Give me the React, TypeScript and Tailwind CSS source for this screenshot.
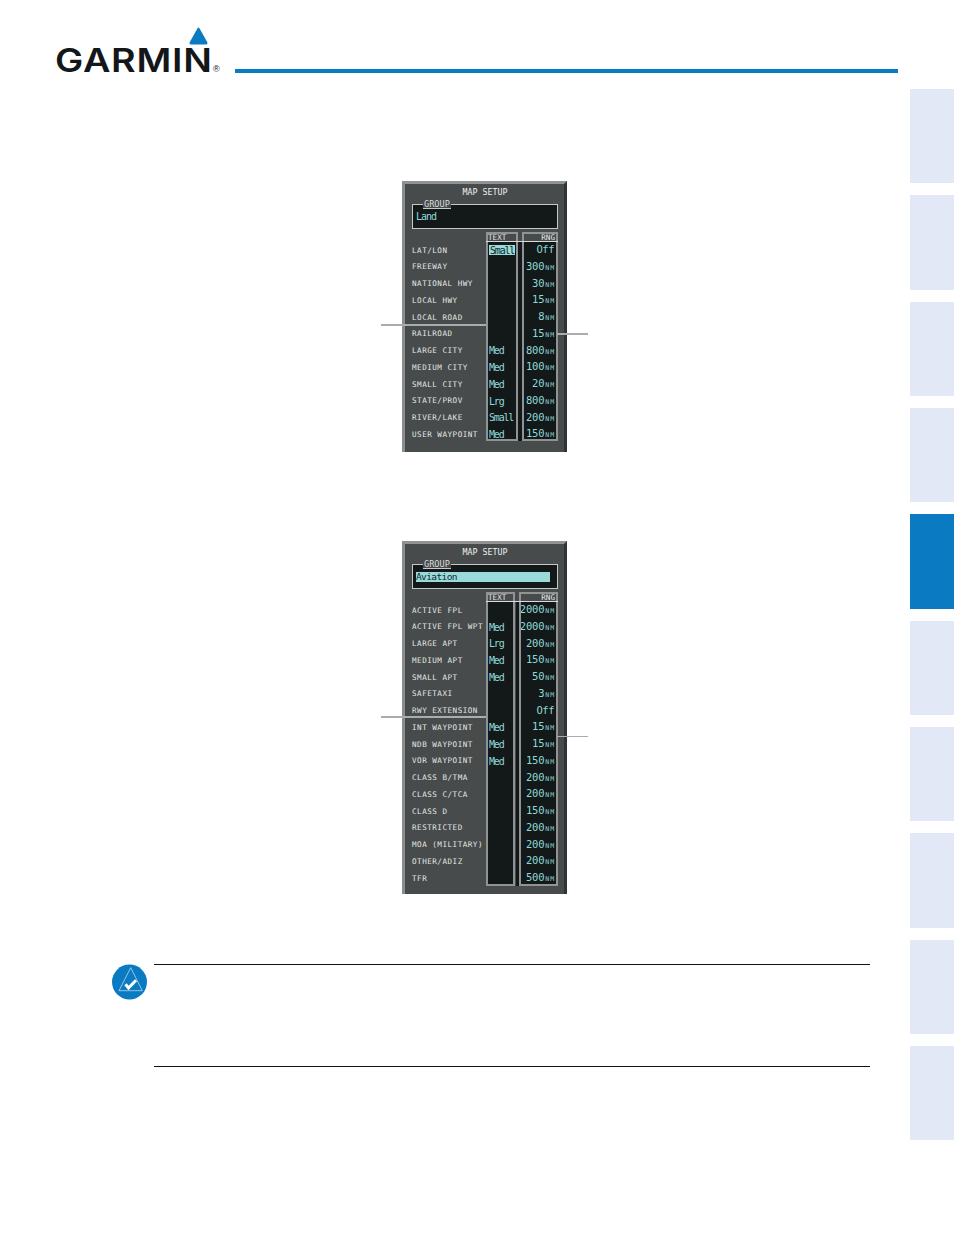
const mono = "font-['DejaVu_Sans_Mono',monospace]";

const landRows: [string, string, string][] = [
  ["LAT/LON", "Small", "Off"],
  ["FREEWAY", "", "300NM"],
  ["NATIONAL HWY", "", "30NM"],
  ["LOCAL HWY", "", "15NM"],
  ["LOCAL ROAD", "", "8NM"],
  ["RAILROAD", "", "15NM"],
  ["LARGE CITY", "Med", "800NM"],
  ["MEDIUM CITY", "Med", "100NM"],
  ["SMALL CITY", "Med", "20NM"],
  ["STATE/PROV", "Lrg", "800NM"],
  ["RIVER/LAKE", "Small", "200NM"],
  ["USER WAYPOINT", "Med", "150NM"],
];

const aviationRows: [string, string, string][] = [
  ["ACTIVE FPL", "", "2000NM"],
  ["ACTIVE FPL WPT", "Med", "2000NM"],
  ["LARGE APT", "Lrg", "200NM"],
  ["MEDIUM APT", "Med", "150NM"],
  ["SMALL APT", "Med", "50NM"],
  ["SAFETAXI", "", "3NM"],
  ["RWY EXTENSION", "", "Off"],
  ["INT WAYPOINT", "Med", "15NM"],
  ["NDB WAYPOINT", "Med", "15NM"],
  ["VOR WAYPOINT", "Med", "150NM"],
  ["CLASS B/TMA", "", "200NM"],
  ["CLASS C/TCA", "", "200NM"],
  ["CLASS D", "", "150NM"],
  ["RESTRICTED", "", "200NM"],
  ["MOA (MILITARY)", "", "200NM"],
  ["OTHER/ADIZ", "", "200NM"],
  ["TFR", "", "500NM"],
];

function RangeValue({ value }: { value: string }) {
  if (!value.endsWith("NM")) {
    return <span className="pr-[2px] text-[10.5px] tracking-[-0.5px]">{value}</span>;
  }
  return (
    <span className="pr-[1px] text-[10.5px] tracking-[-0.2px]">
      {value.slice(0, -2)}
      <span className="ml-[1px] text-[6.5px] tracking-[0.9px]">NM</span>
    </span>
  );
}

function MapSetup({
  rows,
  group,
  height,
  listHeight,
  textWidth,
  rangeWidth,
  highlightFirst,
  groupActive,
  leftLineY,
  rightLineY,
  rightLineClass,
}: {
  rows: [string, string, string][];
  group: string;
  height: string;
  listHeight: string;
  textWidth: string;
  rangeWidth: string;
  highlightFirst: boolean;
  groupActive: boolean;
  leftLineY: string;
  rightLineY: string;
  rightLineClass: string;
}) {
  return (
    <div
      className={`relative w-[165px] ${height} ${mono} border-t-[3px] border-l-[3px] border-r-[3px] border-t-[#8f9393] border-l-[#8a8e8e] border-r-[#303434] bg-[#474b4b]`}
    >
      <div className="flex h-[14px] items-center justify-center pl-[1px] pt-[2px] text-[8.3px] leading-none text-[#f0f2f2]">
        MAP SETUP
      </div>

      {/* group box */}
      <div className="relative ml-[7px] mt-[6px] flex h-[25px] w-[146px] items-center border border-[#c4c8c8] bg-[#131818] pl-[3px]">
        <div className="absolute -top-[5px] left-[10px] border-b border-[#c4c8c8] bg-[#474b4b] px-[1px] text-[8.6px] leading-[8px] text-[#d8dcdc]">
          GROUP
        </div>
        {groupActive ? (
          <div className="flex h-[10px] w-[134px] items-center bg-[#9adada] pt-[2px] text-[9.5px] tracking-[-0.6px] text-[#0f2a2a]">
            {group}
          </div>
        ) : (
          <div className="text-[10px] tracking-[-1px] text-[#8fd8d8]">{group}</div>
        )}
      </div>

      <div className="mt-[3px] flex pl-[7px]">
        <div className="w-[74px] shrink-0 pt-[10px] text-[7.6px] tracking-[0.5px] text-[#e4e8e8]">
          {rows.map(([label]) => (
            <div key={label} className="flex h-[16.75px] items-center whitespace-nowrap">
              {label}
            </div>
          ))}
        </div>

        <div className="relative flex w-[72px] gap-[4px]" style={{ height: listHeight }}>
          <div className="absolute bottom-0 left-[30px] top-[10px] w-[6px] bg-[#131818]" />
          <div className={`relative flex flex-col overflow-hidden ${textWidth} border-2 border-[#8f9393]`}>
            <div className="h-[8px] shrink-0 text-[7.6px] leading-[8px] text-[#e4e8e8]">TEXT</div>
            <div className="flex-1 bg-[#131818] pl-[1px] text-[10px] tracking-[-1.2px] text-[#8fd8d8]">
              {rows.map(([label, size], i) => (
                <div key={label} className="flex h-[16.75px] items-center">
                  {highlightFirst && i === 0 ? (
                    <span className="flex h-[10px] items-center bg-[#9adada] px-[1px] text-[#0f2a2a]">
                      {size}
                    </span>
                  ) : (
                    size
                  )}
                </div>
              ))}
            </div>
          </div>
          <div className={`relative flex flex-col overflow-hidden ${rangeWidth} border-2 border-[#8f9393]`}>
            <div className="h-[8px] shrink-0 pr-[1px] text-right text-[7.6px] leading-[8px] text-[#e4e8e8]">RNG</div>
            <div className="flex-1 bg-[#131818] text-[#8fd8d8]">
              {rows.map(([label, , range]) => (
                <div key={label} className="flex h-[16.75px] items-center justify-end pb-[2px] leading-none">
                  <RangeValue value={range} />
                </div>
              ))}
            </div>
          </div>
          <div className="absolute left-0 top-[9px] h-px w-[72px] bg-[#d8dcdc]" />
        </div>
      </div>

      {/* callout lines */}
      <div className={`absolute -left-[24px] h-[2px] w-[105px] bg-[#a9adad] ${leftLineY}`} />
      <div className={`absolute -right-[24px] w-[31px] bg-[#a9adad] ${rightLineY} ${rightLineClass}`} />
    </div>
  );
}

function Tab({ active }: { active?: boolean }) {
  return <div className={`h-[94.33px] w-[44px] ${active ? "bg-[#0a7bc2]" : "bg-[#e3e8f7]"}`} />;
}

export default function App() {
  return (
    <div className="flex h-[1235px] w-[954px] overflow-hidden bg-white">
      <div className="w-[910px] shrink-0">
        {/* header */}
        <div className="flex h-[181px] items-start pl-[56px] pt-[27px]">
          <div className="relative h-[46px] w-[179px] shrink-0">
            <svg className="absolute left-[133px] top-0" width="19" height="18" viewBox="0 0 19 18">
              <path
                d="M9.5 0.5 Q10 0.5 10.6 1.4 L18.2 15 Q19 17.5 17 17.5 L2 17.5 Q0 17.5 0.8 15 L8.4 1.4 Q9 0.5 9.5 0.5 Z"
                fill="#0a7bc2"
              />
            </svg>
            <div className="absolute -left-[1px] top-[18px] origin-left scale-x-[1.18] font-['Inter',sans-serif] text-[32px] font-semibold leading-[32px] tracking-[0.6px] text-[#14171a]">
              GARMIN
            </div>
            <div className="absolute left-[157px] top-[38px] font-['Liberation_Sans',sans-serif] text-[9px] leading-[9px] text-[#14171a]">
              ®
            </div>
          </div>
          <div className="mt-[42px] h-[4px] w-[663px] bg-[#0a7bc2]" />
        </div>

        <div className="pl-[402px]">
          <MapSetup
            rows={landRows}
            group="Land"
            height="h-[271px]"
            listHeight="209px"
            textWidth="w-[32px]"
            rangeWidth="w-[36px]"
            highlightFirst
            groupActive={false}
            leftLineY="top-[140px]"
            rightLineY="top-[149px]"
            rightLineClass="h-[2px]"
          />
          <div className="mt-[89px]">
            <MapSetup
              rows={aviationRows}
              group="Aviation"
              height="h-[353px]"
              listHeight="294px"
              textWidth="w-[29px]"
              rangeWidth="w-[39px]"
              highlightFirst={false}
              groupActive
              leftLineY="top-[172px]"
              rightLineY="top-[192px]"
              rightLineClass="h-px"
            />
          </div>
        </div>

        {/* note */}
        <div className="mt-[70px] flex pl-[112px]">
          <svg className="shrink-0" width="35" height="36" viewBox="0 0 35 36">
            <circle cx="17.5" cy="18" r="17.5" fill="#0a7bc2" />
            <path d="M18.7 3.7 L30.3 26.7 L7 26.7 Z" fill="none" stroke="#cfe4f3" strokeWidth="0.7" />
            <path d="M13.5 20.3 L16.5 24 L24 16.3" fill="none" stroke="#ffffff" strokeWidth="3" />
          </svg>
          <div className="ml-[7px] h-[103px] w-[716px] border-y border-[#111]" />
        </div>
      </div>

      {/* side tabs */}
      <div className="flex w-[44px] shrink-0 flex-col gap-[12px] pt-[89px]">
        <Tab />
        <Tab />
        <Tab />
        <Tab />
        <Tab active />
        <Tab />
        <Tab />
        <Tab />
        <Tab />
        <Tab />
      </div>
    </div>
  );
}
